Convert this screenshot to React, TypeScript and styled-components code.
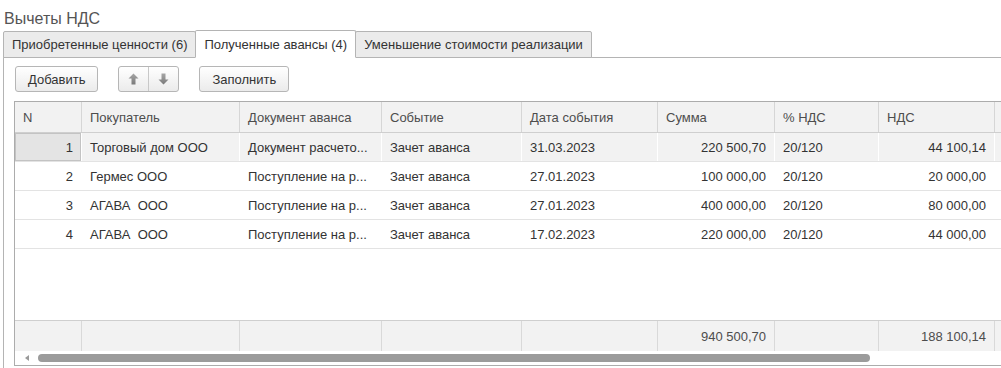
import styled, { createGlobalStyle } from "styled-components";

const GlobalStyle = createGlobalStyle`
  html, body {
    margin: 0;
    padding: 0;
    background: #fff;
  }
  body {
    font-family: "Liberation Sans", Arial, sans-serif;
    font-size: 13px;
    color: #333;
    overflow: hidden;
  }
`;

interface Row {
  n: number;
  buyer: string;
  doc: string;
  event: string;
  date: string;
  sum: string;
  rate: string;
  vat: string;
}

const rows: Row[] = [
  { n: 1, buyer: "Торговый дом ООО", doc: "Документ расчето...", event: "Зачет аванса", date: "31.03.2023", sum: "220 500,70", rate: "20/120", vat: "44 100,14" },
  { n: 2, buyer: "Гермес ООО", doc: "Поступление на р...", event: "Зачет аванса", date: "27.01.2023", sum: "100 000,00", rate: "20/120", vat: "20 000,00" },
  { n: 3, buyer: "АГАВА  ООО", doc: "Поступление на р...", event: "Зачет аванса", date: "27.01.2023", sum: "400 000,00", rate: "20/120", vat: "80 000,00" },
  { n: 4, buyer: "АГАВА  ООО", doc: "Поступление на р...", event: "Зачет аванса", date: "17.02.2023", sum: "220 000,00", rate: "20/120", vat: "44 000,00" },
];

const columns = "67px 158px 142px 140px 136px 117px 104px 116px 120px";

const App = () => {
  return (
    <>
      <GlobalStyle />
      <Page>
        <Title>Вычеты НДС</Title>
        <TabBar>
          <Tab>Приобретенные ценности (6)</Tab>
          <Tab $active>Полученные авансы (4)</Tab>
          <Tab>Уменьшение стоимости реализации</Tab>
        </TabBar>
        <Panel>
          <Toolbar>
            <Button>Добавить</Button>
            <ButtonGroup>
              <ArrowButton>
                <Arrow />
              </ArrowButton>
              <ArrowButton>
                <Arrow $down />
              </ArrowButton>
            </ButtonGroup>
            <Button>Заполнить</Button>
          </Toolbar>

          <Table>
            <HeaderRow>
              <HeadCell>N</HeadCell>
              <HeadCell>Покупатель</HeadCell>
              <HeadCell>Документ аванса</HeadCell>
              <HeadCell>Событие</HeadCell>
              <HeadCell>Дата события</HeadCell>
              <HeadCell>Сумма</HeadCell>
              <HeadCell>% НДС</HeadCell>
              <HeadCell>НДС</HeadCell>
              <HeadCell />
            </HeaderRow>

            {rows.map((r, i) => (
              <BodyRow key={r.n} $selected={i === 0}>
                <Cell $right $focused={i === 0}>{r.n}</Cell>
                <Cell>{r.buyer}</Cell>
                <Cell>{r.doc}</Cell>
                <Cell>{r.event}</Cell>
                <Cell>{r.date}</Cell>
                <Cell $right>{r.sum}</Cell>
                <Cell>{r.rate}</Cell>
                <Cell $right>{r.vat}</Cell>
                <Cell />
              </BodyRow>
            ))}

            <Spacer />

            <FooterRow>
              <FootCell />
              <FootCell />
              <FootCell />
              <FootCell />
              <FootCell />
              <FootCell>940 500,70</FootCell>
              <FootCell />
              <FootCell>188 100,14</FootCell>
              <FootCell />
            </FooterRow>

            <ScrollBar>
              <ScrollArrow>
                <svg width="4" height="6" viewBox="0 0 4 6">
                  <polygon points="4,0 4,6 0,3" fill="#9a9a9a" />
                </svg>
              </ScrollArrow>
              <Thumb />
              <Track />
            </ScrollBar>
          </Table>
        </Panel>
      </Page>
    </>
  );
};

export default App;

// block arrow drawn pointing up, rotated for the down button
const Arrow: React.FC<{ $down?: boolean }> = ({ $down }) => (
  <svg width="11" height="12" viewBox="0 0 11 12" style={$down ? { transform: "rotate(180deg)" } : undefined}>
    <defs>
      <linearGradient id={$down ? "ad" : "au"} x1="0" y1="0" x2="0" y2="1">
        <stop offset="0" stopColor={$down ? "#7a7a7a" : "#a6a6a6"} />
        <stop offset="1" stopColor={$down ? "#a6a6a6" : "#7a7a7a"} />
      </linearGradient>
    </defs>
    <polygon points="5.5,0.5 10.5,5.5 7.5,5.5 7.5,11.5 3.5,11.5 3.5,5.5 0.5,5.5" fill={`url(#${$down ? "ad" : "au"})`} />
  </svg>
);

const Page = styled.div`
  width: 1001px;
  height: 368px;
  overflow: hidden;
  padding-left: 3px;
  box-sizing: border-box;
  display: flex;
  flex-direction: column;
`;

const Title = styled.div`
  height: 20px;
  padding-top: 10px;
  padding-left: 1px;
  font-size: 16px;
  line-height: 18px;
  color: #555;
`;

const TabBar = styled.div`
  display: flex;
  align-items: flex-end;
  height: 28px;
  border-bottom: 1px solid #b4b4b4;
  box-sizing: border-box;
`;

const Tab = styled.div<{ $active?: boolean }>`
  box-sizing: border-box;
  height: ${(p) => (p.$active ? "28px" : "27px")};
  margin-bottom: -1px;
  margin-left: -1px;
  &:first-child {
    margin-left: 0;
  }
  padding: 0 8px;
  display: flex;
  align-items: center;
  border: 1px solid #b4b4b4;
  border-bottom-color: ${(p) => (p.$active ? "#fff" : "#b4b4b4")};
  border-radius: 2px 2px 0 0;
  background: ${(p) => (p.$active ? "#fff" : "#ebebeb")};
  color: #333;
  font-size: 13px;
  white-space: nowrap;
  position: relative;
  z-index: ${(p) => (p.$active ? 1 : 0)};
`;

const Panel = styled.div`
  flex: 1;
  border-left: 1px solid #b4b4b4;
  padding: 8px 0 0 10px;
  display: flex;
  flex-direction: column;
  min-height: 0;
`;

const Toolbar = styled.div`
  display: flex;
  align-items: center;
  gap: 20px;
  padding-left: 1px;
  height: 26px;
  margin-bottom: 9px;
`;

const Button = styled.div`
  box-sizing: border-box;
  height: 26px;
  padding: 0 12px;
  display: flex;
  align-items: center;
  border: 1px solid #b6b6b6;
  border-radius: 3px;
  background: linear-gradient(#ffffff, #ebebeb);
  color: #333;
  font-size: 13px;
  white-space: nowrap;
`;

const ButtonGroup = styled.div`
  display: flex;
  box-sizing: border-box;
  height: 26px;
  border: 1px solid #b6b6b6;
  border-radius: 3px;
  background: linear-gradient(#ffffff, #ebebeb);
`;

const ArrowButton = styled.div`
  width: 29px;
  display: flex;
  align-items: center;
  justify-content: center;
  & + & {
    border-left: 1px solid #c8c8c8;
  }
`;

const Table = styled.div`
  height: 265px;
  box-sizing: border-box;
  width: 1050px;
  border: 1px solid #acacac;
  display: flex;
  flex-direction: column;
`;

const HeaderRow = styled.div`
  display: grid;
  grid-template-columns: ${columns};
  height: 31px;
  box-sizing: border-box;
  border-bottom: 1px solid #cfcfcf;
  background: #f2f2f2;
`;

const HeadCell = styled.div`
  box-sizing: border-box;
  border-right: 1px solid #d6d6d6;
  padding: 0 8px;
  display: flex;
  align-items: center;
  color: #4d4d4d;
  white-space: nowrap;
`;

const BodyRow = styled.div<{ $selected?: boolean }>`
  display: grid;
  grid-template-columns: ${columns};
  height: 29px;
  box-sizing: border-box;
  border-bottom: 1px solid #e3e3e3;
  background: ${(p) => (p.$selected ? "#f2f2f2" : "#fff")};
`;

const Cell = styled.div<{ $right?: boolean; $focused?: boolean }>`
  box-sizing: border-box;
  border-right: 1px solid #fff;
  padding: 0 8px;
  display: flex;
  align-items: center;
  justify-content: ${(p) => (p.$right ? "flex-end" : "flex-start")};
  white-space: pre;
  overflow: hidden;
  color: #333;
  ${(p) =>
    p.$focused &&
    `
    background: #e4e4e4;
    box-shadow: inset 0 0 0 1px #c3c3c3;
  `}
`;

const Spacer = styled.div`
  flex: 1;
`;

const FooterRow = styled.div`
  display: grid;
  grid-template-columns: ${columns};
  height: 31px;
  box-sizing: border-box;
  border-top: 1px solid #cfcfcf;
  background: #f2f2f2;
`;

const FootCell = styled.div`
  box-sizing: border-box;
  border-right: 1px solid #d9d9d9;
  padding: 0 8px;
  display: flex;
  align-items: center;
  justify-content: flex-end;
  color: #4d4d4d;
  white-space: nowrap;
`;

const ScrollBar = styled.div`
  height: 14px;
  display: flex;
  align-items: center;
`;

const ScrollArrow = styled.div`
  width: 23px;
  display: flex;
  justify-content: center;
`;

const Thumb = styled.div`
  width: 832px;
  height: 8px;
  border-radius: 4px;
  background: #9b9b9b;
`;

const Track = styled.div`
  flex: 1;
  height: 8px;
  background: #d8d8d8;
  margin-left: -4px;
  position: relative;
  z-index: -1;
`;
